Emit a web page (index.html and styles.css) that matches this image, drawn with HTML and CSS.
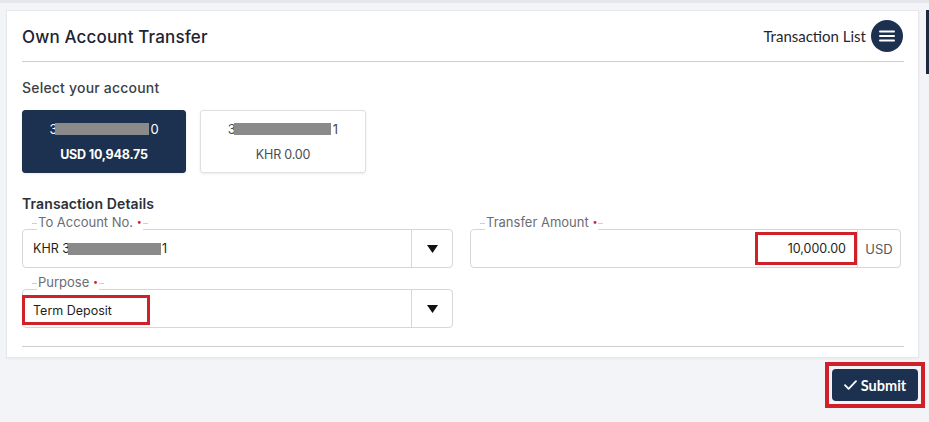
FILE: index.html
```html
<!DOCTYPE html>
<html lang="en">
<head>
<meta charset="utf-8">
<title>Own Account Transfer</title>
<link rel="stylesheet" href="styles.css">
</head>
<body>
<div class="topbar"></div>
<div class="edge"></div>
<main class="page">
  <section class="card">
    <header class="card-head">
      <h1 class="title">Own Account Transfer</h1>
      <div class="tx-list">
        <span>Transaction List</span>
        <span class="menu-btn">
          <svg width="16" height="12" viewBox="0 0 16 12"><rect x="0" y="0.5" width="16" height="2" rx="1" fill="#fff"/><rect x="0" y="5" width="16" height="2" rx="1" fill="#fff"/><rect x="0" y="9.5" width="16" height="2" rx="1" fill="#fff"/></svg>
        </span>
      </div>
    </header>

    <h2 class="section-label">Select your account</h2>
    <div class="accounts">
      <div class="acct acct-active">
        <div class="acct-no">3<span class="mask mask-a"></span>0</div>
        <div class="acct-bal">USD 10,948.75</div>
      </div>
      <div class="acct">
        <div class="acct-no">3<span class="mask mask-b"></span>1</div>
        <div class="acct-bal">KHR 0.00</div>
      </div>
    </div>

    <h2 class="section-label strong">Transaction Details</h2>
    <div class="form-grid">
      <div class="field">
        <label class="legend"><span>To Account No. <i class="req">•</i></span></label>
        <div class="box">
          <div class="value">KHR 3<span class="mask mask-c"></span>1</div>
          <div class="caret"><svg width="11" height="8" viewBox="0 0 11 8"><path d="M0 0h11L5.5 8z" fill="#111"/></svg></div>
        </div>
      </div>
      <div class="field">
        <label class="legend"><span>Transfer Amount <i class="req">•</i></span></label>
        <div class="box">
          <div class="value amount"><span class="mark mark-amount">10,000.00</span></div>
          <div class="addon">USD</div>
        </div>
      </div>
      <div class="field">
        <label class="legend"><span>Purpose <i class="req">•</i></span></label>
        <div class="box">
          <div class="value flush"><span class="mark mark-purpose">Term Deposit</span></div>
          <div class="caret"><svg width="11" height="8" viewBox="0 0 11 8"><path d="M0 0h11L5.5 8z" fill="#111"/></svg></div>
        </div>
      </div>
    </div>
    <hr class="divider">
  </section>

  <div class="actions">
    <span class="mark-btn">
      <button class="submit" type="button">
        <svg width="13" height="10" viewBox="0 0 13 10"><path d="M1 5.2l3.6 3.6L12 1.2" fill="none" stroke="#fff" stroke-width="1.8" stroke-linecap="round" stroke-linejoin="round"/></svg>
        Submit
      </button>
    </span>
  </div>
</main>
</body>
</html>
```

FILE: styles.css
```css
* { box-sizing: border-box; }

html, body {
  margin: 0;
  padding: 0;
  background: #f3f4f8;
  font-family: "Inter", "Noto Sans", sans-serif;
  color: #222;
}

body {
  min-height: 422px;
}

.topbar {
  height: 3px;
  background: #e4e6ec;
}

.edge {
  position: absolute;
  right: 0;
  top: 10px;
  width: 3px;
  height: 64px;
  background: #1b2a40;
}

.page {
  padding: 7px 4px 0 6px;
}

.card {
  background: #fff;
  border: 1px solid #e6e8ee;
  box-shadow: 0 1px 2px rgba(0,0,0,0.04);
  padding: 0 14px 10px 15px;
  width: 913px;
}

.card-head {
  height: 51px;
  display: flex;
  align-items: center;
  justify-content: space-between;
  border-bottom: 1px solid #cfcfd3;
  padding-top: 2px;
}

.title {
  margin: 0;
  font-size: 17px;
  font-weight: 500;
  color: #1c2433;
  letter-spacing: 0.15px;
}

.tx-list {
  display: flex;
  align-items: center;
  gap: 5px;
  font-family: "Lato", sans-serif;
  font-size: 15px;
  color: #1f2630;
  margin-right: 1px;
  margin-top: -3px;
}

.menu-btn {
  width: 32px;
  height: 32px;
  border-radius: 50%;
  background: #1c3150;
  display: flex;
  align-items: center;
  justify-content: center;
}

.section-label {
  margin: 16px 0 0;
  font-size: 14px;
  line-height: 20px;
  font-weight: 500;
  color: #3b3f46;
  letter-spacing: 0.2px;
}

.section-label.strong {
  margin-top: 21px;
  font-weight: 600;
  color: #2c3038;
  letter-spacing: 0.1px;
}

.accounts {
  display: flex;
  gap: 14px;
  margin-top: 12px;
}

.acct {
  width: 166px;
  height: 63px;
  border: 1px solid #dedfe3;
  border-radius: 3px;
  box-shadow: 0 1px 3px rgba(0,0,0,0.08);
  display: flex;
  flex-direction: column;
  align-items: center;
  justify-content: center;
  gap: 10px;
  color: #4a4d52;
}

.acct-active {
  width: 164px;
  background: #1c3150;
  border-color: #1c3150;
  color: #fff;
}

.acct-no {
  font-size: 13px;
  line-height: 16px;
  display: flex;
  align-items: center;
}

.acct-bal {
  font-size: 12.5px;
  line-height: 16px;
  letter-spacing: -0.2px;
}

.acct-active .acct-bal {
  font-weight: 700;
}

.mask {
  display: inline-block;
  height: 12px;
  background: #8a8a8a;
}

.mask-a { width: 94px; margin: 0 1px 0 -2px; }
.mask-b { width: 97px; margin: 0 2px 0 -2px; }
.mask-c { width: 93px; margin: 0 1px 0 -2px; }

.form-grid {
  display: grid;
  grid-template-columns: 431px 431px;
  column-gap: 17px;
  row-gap: 6px;
}

.field {
  display: flex;
  flex-direction: column;
  align-items: flex-start;
}

.legend {
  position: relative;
  display: inline-block;
  margin-left: 10px;
  padding: 0 5px;
  height: 15px;
  font-size: 13px;
  line-height: 17px;
  color: #6a6d72;
}

.legend::before {
  content: "";
  position: absolute;
  left: 0;
  right: 0;
  bottom: 5px;
  height: 1px;
  background: #cfd0d4;
}

.legend span {
  position: relative;
  background: #fff;
  padding: 0 1px;
}

.req {
  font-style: normal;
  color: #c8242c;
  font-size: 9px;
  position: relative;
  top: -2px;
}

.box {
  width: 100%;
  height: 39px;
  border: 1px solid #d5d6da;
  border-radius: 4px;
  display: flex;
  align-items: stretch;
}

.value {
  flex: 1;
  display: flex;
  align-items: center;
  padding-left: 10px;
  font-size: 12.5px;
  color: #1e1f22;
}

.value.flush {
  padding-left: 0;
  margin-left: -1px;
}

.value.amount {
  justify-content: flex-end;
  padding-left: 0;
}

.mark {
  display: inline-flex;
  align-items: center;
  border: 3px solid #d0202a;
}

.mark-purpose {
  width: 128px;
  height: 30px;
  padding-left: 8px;
  margin-top: 3px;
}

.mark-amount {
  width: 102px;
  height: 33px;
  justify-content: flex-end;
  padding-right: 8px;
}

.caret {
  width: 41px;
  border-left: 1px solid #d5d6da;
  display: flex;
  align-items: center;
  justify-content: center;
}

.addon {
  width: 43px;
  border-left: 1px solid #d5d6da;
  display: flex;
  align-items: center;
  justify-content: center;
  font-size: 13px;
  color: #55585d;
}

.divider {
  margin: 18px 0 0;
  border: 0;
  border-top: 1px solid #cfcfd3;
}

.actions {
  display: flex;
  justify-content: flex-end;
  margin-top: 4px;
}

.mark-btn {
  display: inline-flex;
  border: 4px solid #d0202a;
  padding: 3px;
}

.submit {
  width: 86px;
  height: 32px;
  border: 0;
  border-radius: 4px;
  background: #1c3150;
  color: #fff;
  font-family: "Lato", sans-serif;
  font-weight: 700;
  font-size: 14.5px;
  display: flex;
  align-items: center;
  justify-content: center;
  gap: 4px;
  padding: 0;
}
```
